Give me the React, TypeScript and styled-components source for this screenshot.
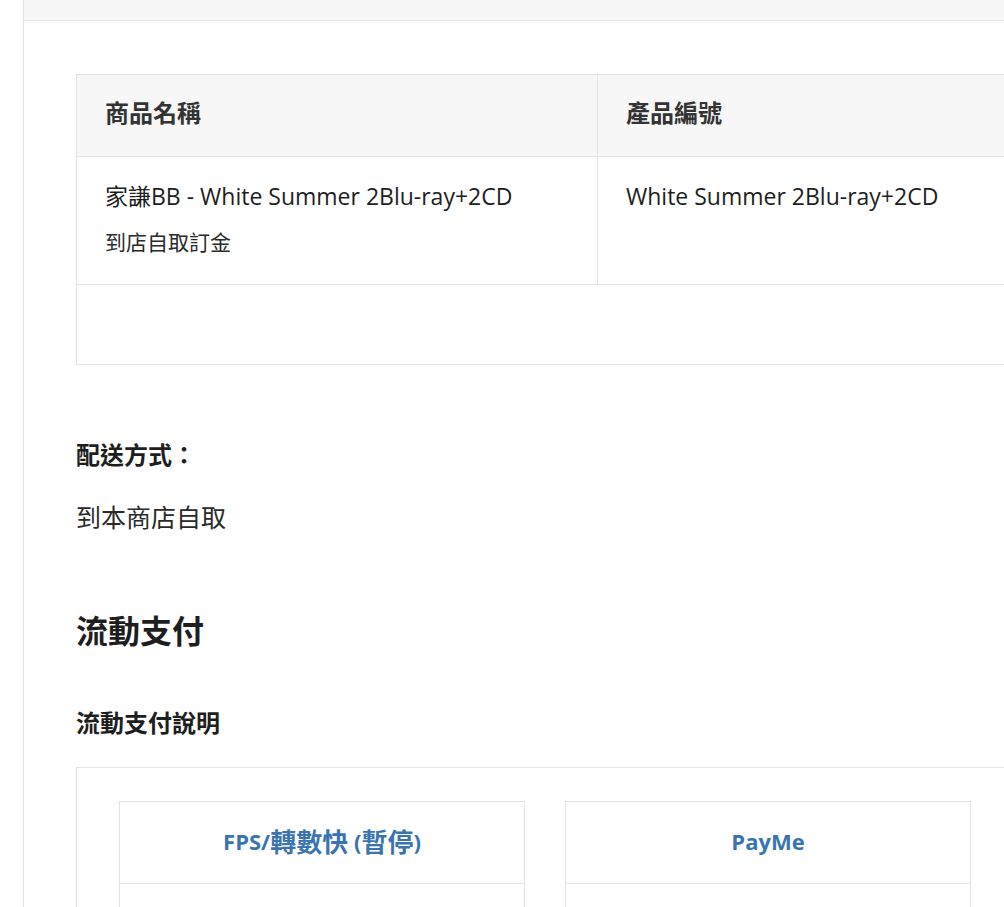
import React from "react";
import styled, { createGlobalStyle } from "styled-components";

const GlobalStyle = createGlobalStyle`
  html, body {
    margin: 0;
    padding: 0;
    background: #ffffff;
    overflow: hidden;
  }
  body {
    font-family: "Open Sans", "Noto Sans CJK TC", sans-serif;
    color: #222222;
  }
`;

const Page = styled.div`
  display: flex;
  width: 1300px;
  min-height: 907px;
`;

const Gutter = styled.div`
  width: 23px;
  flex: none;
`;

const Panel = styled.div`
  flex: 1;
  border-left: 1px solid #e3e3e3;
`;

const PanelHeading = styled.div`
  height: 20px;
  background: #f7f7f7;
  border-bottom: 1px solid #e6e6e6;
`;

const PanelBody = styled.div`
  padding: 53px 0 0 52px;
`;

const Table = styled.table`
  border-collapse: collapse;
  width: 1150px;
  table-layout: fixed;
  border: 1px solid #e3e3e3;
`;

const HeadCell = styled.th<{ $width?: number }>`
  width: ${(p) => (p.$width ? `${p.$width}px` : "auto")};
  height: 82px;
  padding: 0 28px 8px;
  background: #f7f7f7;
  border: 1px solid #e3e3e3;
  text-align: left;
  font-size: 24px;
  font-weight: 700;
  color: #333333;
  box-sizing: border-box;
`;

const Cell = styled.td`
  vertical-align: top;
  padding: 23px 28px 27px;
  border: 1px solid #e3e3e3;
  height: 128px;
  box-sizing: border-box;
`;

const EmptyCell = styled.td`
  height: 80px;
  padding: 0;
  border: 1px solid #e3e3e3;
  box-sizing: border-box;
`;

const ItemName = styled.div`
  font-size: 23px;
  line-height: 33px;
  color: #1e1e1e;
  white-space: nowrap;
`;

const ItemNote = styled.div`
  margin-top: 14px;
  font-size: 21px;
  line-height: 30px;
  color: #2a2a2a;
`;

const Label = styled.div`
  margin-top: 73px;
  font-size: 24px;
  font-weight: 700;
  line-height: 34px;
  color: #1e1e1e;
`;

const Value = styled.div`
  margin-top: 28px;
  font-size: 25px;
  line-height: 34px;
  color: #2a2a2a;
`;

const SectionTitle = styled.h2`
  margin: 75px 0 0;
  font-size: 32px;
  font-weight: 600;
  line-height: 44px;
  color: #1e1e1e;
`;

const SubTitle = styled.h3`
  margin: 53px 0 0;
  font-size: 24px;
  font-weight: 700;
  line-height: 34px;
  color: #1e1e1e;
`;

const PayBox = styled.div`
  margin-top: 27px;
  width: 1150px;
  border: 1px solid #e3e3e3;
  padding: 33px 0 0 42px;
  display: flex;
  gap: 40px;
  min-height: 200px;
  box-sizing: border-box;
`;

const PayCard = styled.div`
  width: 406px;
  flex: none;
  border: 1px solid #e3e3e3;
  box-sizing: border-box;
`;

const PayHeader = styled.div`
  height: 82px;
  padding-bottom: 3px;
  display: flex;
  align-items: center;
  justify-content: center;
  border-bottom: 1px solid #e3e3e3;
  font-size: 22px;
  font-weight: 700;
  color: #3a74b0;
  box-sizing: border-box;
  white-space: pre;
`;

// Chinese glyphs in the method names run a little wider than the Latin ones
const Han = styled.span`
  font-size: 26px;
`;

const PayBody = styled.div`
  height: 80px;
`;

const App = (): React.ReactElement => {
  return (
    <>
      <GlobalStyle />
      <Page>
        <Gutter />
        <Panel>
          <PanelHeading />
          <PanelBody>
            <Table>
              <thead>
                <tr>
                  <HeadCell $width={521}>商品名稱</HeadCell>
                  <HeadCell>產品編號</HeadCell>
                </tr>
              </thead>
              <tbody>
                <tr>
                  <Cell>
                    <ItemName>家謙BB - White Summer 2Blu-ray+2CD</ItemName>
                    <ItemNote>到店自取訂金</ItemNote>
                  </Cell>
                  <Cell>
                    <ItemName>White Summer 2Blu-ray+2CD</ItemName>
                  </Cell>
                </tr>
                <tr>
                  <EmptyCell colSpan={2} />
                </tr>
              </tbody>
            </Table>

            <Label>配送方式：</Label>
            <Value>到本商店自取</Value>

            <SectionTitle>流動支付</SectionTitle>
            <SubTitle>流動支付說明</SubTitle>

            <PayBox>
              <PayCard>
                <PayHeader>
                  FPS/<Han>轉數快</Han> (<Han>暫停</Han>)
                </PayHeader>
                <PayBody />
              </PayCard>
              <PayCard>
                <PayHeader>PayMe</PayHeader>
                <PayBody />
              </PayCard>
            </PayBox>
          </PanelBody>
        </Panel>
      </Page>
    </>
  );
};

export default App;
